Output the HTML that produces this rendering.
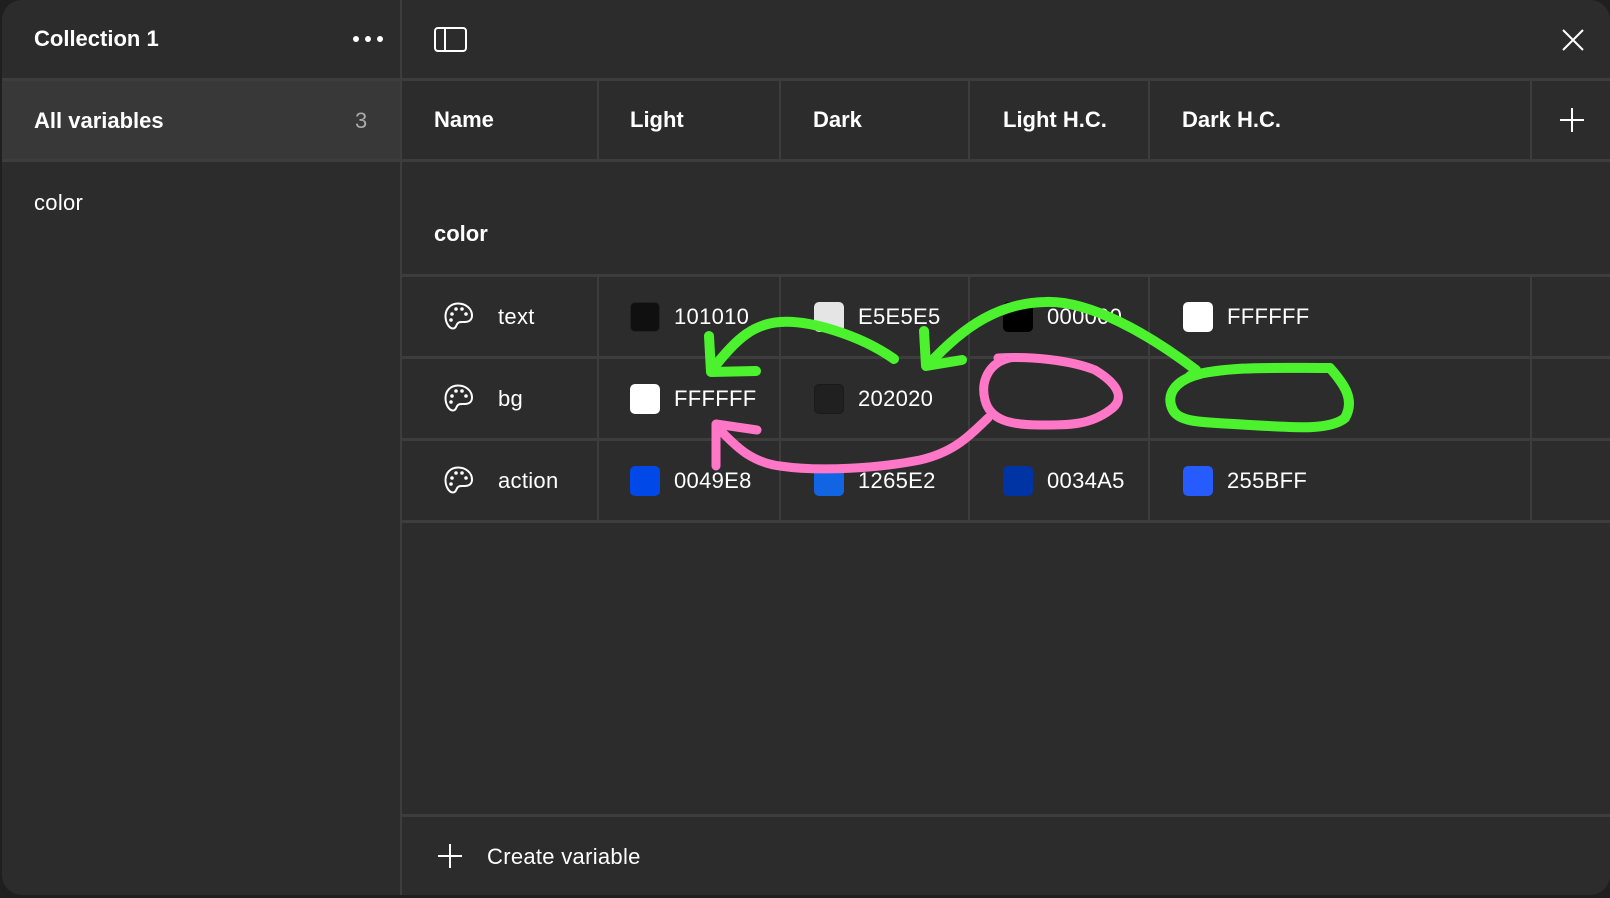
<!DOCTYPE html>
<html><head><meta charset="utf-8"><style>
html,body{margin:0;padding:0;width:1610px;height:898px;background:#1f1f1f;overflow:hidden;font-family:"Liberation Sans",sans-serif;color:#fff}
.win{position:absolute;left:2px;top:0;width:1608px;height:895px;background:#2c2c2c;border-radius:20px;overflow:hidden}
.abs{position:absolute}
.hl{position:absolute;height:3px;background:#3d3d3d}
.vl{position:absolute;width:2px;background:#3d3d3d}
.t{position:absolute;font-size:22px;line-height:24px;white-space:nowrap;letter-spacing:0.3px}
.b{font-weight:bold;letter-spacing:0}
.sw{position:absolute;width:30px;height:30px;border-radius:5px}
</style></head><body>
<div class="win">
  <div class="abs" style="left:0;top:80px;width:398px;height:81px;background:#383838"></div>
  <div class="vl" style="left:398px;top:0;height:895px"></div>
  <div class="hl" style="left:0;top:78px;width:1608px"></div>
  <div class="hl" style="left:0;top:159px;width:1608px"></div>
  <div class="t b" style="left:32px;top:27px">Collection 1</div>
  <div class="abs" style="left:351px;top:36px;width:6px;height:6px;border-radius:3px;background:#fff"></div>
  <div class="abs" style="left:363px;top:36px;width:6px;height:6px;border-radius:3px;background:#fff"></div>
  <div class="abs" style="left:375px;top:36px;width:6px;height:6px;border-radius:3px;background:#fff"></div>
  <div class="t b" style="left:32px;top:109px">All variables</div>
  <div class="t" style="left:353px;top:109px;color:#aaa">3</div>
  <div class="t" style="left:32px;top:191px">color</div>

  <svg class="abs" style="left:432px;top:27px" width="34" height="26" viewBox="0 0 34 26"><rect x="1" y="1" width="31" height="23" rx="3" fill="none" stroke="#fff" stroke-width="2"/><line x1="11" y1="1" x2="11" y2="24" stroke="#fff" stroke-width="2"/></svg>
  <svg class="abs" style="left:1559px;top:28px" width="24" height="24" viewBox="0 0 24 24"><path d="M2 2L22 22M22 2L2 22" stroke="#fff" stroke-width="2"/></svg>

  <div class="vl" style="left:595px;top:80px;height:81px"></div>
  <div class="vl" style="left:777px;top:80px;height:81px"></div>
  <div class="vl" style="left:966px;top:80px;height:81px"></div>
  <div class="vl" style="left:1146px;top:80px;height:81px"></div>
  <div class="vl" style="left:1528px;top:80px;height:81px"></div>
  <div class="vl" style="left:595px;top:275px;height:246px"></div>
  <div class="vl" style="left:777px;top:275px;height:246px"></div>
  <div class="vl" style="left:966px;top:275px;height:246px"></div>
  <div class="vl" style="left:1146px;top:275px;height:246px"></div>
  <div class="vl" style="left:1528px;top:275px;height:246px"></div>
  <div class="t b" style="left:432px;top:108px">Name</div>
  <div class="t b" style="left:628px;top:108px">Light</div>
  <div class="t b" style="left:811px;top:108px">Dark</div>
  <div class="t b" style="left:1001px;top:108px">Light H.C.</div>
  <div class="t b" style="left:1180px;top:108px">Dark H.C.</div>
  <svg class="abs" style="left:1558px;top:108px" width="24" height="24" viewBox="0 0 24 24"><path d="M12 0V24M0 12H24" stroke="#fff" stroke-width="2"/></svg>

  <div class="t b" style="left:432px;top:222px">color</div>
  <div class="hl" style="left:400px;top:274px;width:1208px"></div>
  <div class="hl" style="left:400px;top:356px;width:1208px"></div>
  <div class="hl" style="left:400px;top:438px;width:1208px"></div>
  <div class="hl" style="left:400px;top:520px;width:1208px"></div>
  <div class="hl" style="left:400px;top:814px;width:1208px"></div>

  <svg class="abs" style="left:442px;top:302px" width="30" height="28" viewBox="0 0 30 28"><path d="M14 1.5C6.5 1.5 1.5 7 1.5 14c0 6.5 3.5 12.5 7.5 12.5 3 0 3-3 4.5-5 1.5-2 4-1.5 7-1.5 5 0 7.5-2.5 7.5-6.5C28 6.5 21.5 1.5 14 1.5z" fill="none" stroke="#fff" stroke-width="2"/><circle cx="8" cy="12" r="1.8" fill="#fff"/><circle cx="12" cy="7" r="1.8" fill="#fff"/><circle cx="18" cy="7" r="1.8" fill="#fff"/><circle cx="22" cy="12" r="1.8" fill="#fff"/><circle cx="7" cy="18" r="1.8" fill="#fff"/></svg>
  <svg class="abs" style="left:442px;top:384px" width="30" height="28" viewBox="0 0 30 28"><path d="M14 1.5C6.5 1.5 1.5 7 1.5 14c0 6.5 3.5 12.5 7.5 12.5 3 0 3-3 4.5-5 1.5-2 4-1.5 7-1.5 5 0 7.5-2.5 7.5-6.5C28 6.5 21.5 1.5 14 1.5z" fill="none" stroke="#fff" stroke-width="2"/><circle cx="8" cy="12" r="1.8" fill="#fff"/><circle cx="12" cy="7" r="1.8" fill="#fff"/><circle cx="18" cy="7" r="1.8" fill="#fff"/><circle cx="22" cy="12" r="1.8" fill="#fff"/><circle cx="7" cy="18" r="1.8" fill="#fff"/></svg>
  <svg class="abs" style="left:442px;top:466px" width="30" height="28" viewBox="0 0 30 28"><path d="M14 1.5C6.5 1.5 1.5 7 1.5 14c0 6.5 3.5 12.5 7.5 12.5 3 0 3-3 4.5-5 1.5-2 4-1.5 7-1.5 5 0 7.5-2.5 7.5-6.5C28 6.5 21.5 1.5 14 1.5z" fill="none" stroke="#fff" stroke-width="2"/><circle cx="8" cy="12" r="1.8" fill="#fff"/><circle cx="12" cy="7" r="1.8" fill="#fff"/><circle cx="18" cy="7" r="1.8" fill="#fff"/><circle cx="22" cy="12" r="1.8" fill="#fff"/><circle cx="7" cy="18" r="1.8" fill="#fff"/></svg>
  <div class="t" style="left:496px;top:305px">text</div>
  <div class="t" style="left:496px;top:387px">bg</div>
  <div class="t" style="left:496px;top:469px">action</div>

  <div class="sw" style="left:628px;top:302px;background:#101010;border:1px solid #222;width:28px;height:28px"></div>
  <div class="t" style="left:672px;top:305px">101010</div>
  <div class="sw" style="left:812px;top:302px;background:#e5e5e5"></div>
  <div class="t" style="left:856px;top:305px">E5E5E5</div>
  <div class="sw" style="left:1001px;top:302px;background:#000"></div>
  <div class="t" style="left:1045px;top:305px">000000</div>
  <div class="sw" style="left:1181px;top:302px;background:#fff"></div>
  <div class="t" style="left:1225px;top:305px">FFFFFF</div>

  <div class="sw" style="left:628px;top:384px;background:#fff"></div>
  <div class="t" style="left:672px;top:387px">FFFFFF</div>
  <div class="sw" style="left:812px;top:384px;background:#202020;border:1px solid #1a1a1a;width:28px;height:28px"></div>
  <div class="t" style="left:856px;top:387px">202020</div>

  <div class="sw" style="left:628px;top:466px;background:#0049e8"></div>
  <div class="t" style="left:672px;top:469px">0049E8</div>
  <div class="sw" style="left:812px;top:466px;background:#1265e2"></div>
  <div class="t" style="left:856px;top:469px">1265E2</div>
  <div class="sw" style="left:1001px;top:466px;background:#0034a5"></div>
  <div class="t" style="left:1045px;top:469px">0034A5</div>
  <div class="sw" style="left:1181px;top:466px;background:#255bff"></div>
  <div class="t" style="left:1225px;top:469px">255BFF</div>

  <svg class="abs" style="left:436px;top:844px" width="24" height="24" viewBox="0 0 24 24"><path d="M12 0V24M0 12H24" stroke="#fff" stroke-width="2"/></svg>
  <div class="t" style="left:485px;top:845px">Create variable</div>
</div>

<svg class="abs" style="left:0;top:0" width="1610" height="898" viewBox="0 0 1610 898">
  <g fill="none" stroke-linecap="round" stroke-linejoin="round" stroke-width="10">
    <path d="M894 359C860 335 810 320 780 322C755 324 738 336 712 370" stroke="#4cf22e"/>
    <path d="M709 336L711 372L756 371" stroke="#4cf22e"/>
    <path d="M1196 370C1150 335 1090 300 1045 302C1000 303 965 325 929 364" stroke="#4cf22e"/>
    <path d="M924 331L926 366L962 360" stroke="#4cf22e"/>
    <path d="M1190 376C1230 366 1270 368 1330 368C1345 385 1355 400 1345 418C1330 430 1300 428 1250 425C1210 422 1180 424 1173 410C1165 395 1175 380 1200 374" stroke="#4cf22e"/>
    <path d="M998 358C1030 356 1070 360 1095 370C1120 385 1125 400 1110 410C1090 425 1070 425 1040 425C1010 425 990 420 985 400C980 380 990 362 1010 358" stroke="#ff77c6" stroke-width="9"/>
    <path d="M988 418C970 435 955 452 920 460C880 468 820 472 780 466C750 462 735 445 722 432" stroke="#ff77c6" stroke-width="9"/>
    <path d="M716 466L716 424L757 430" stroke="#ff77c6" stroke-width="9"/>
  </g>
</svg>
</body></html>
